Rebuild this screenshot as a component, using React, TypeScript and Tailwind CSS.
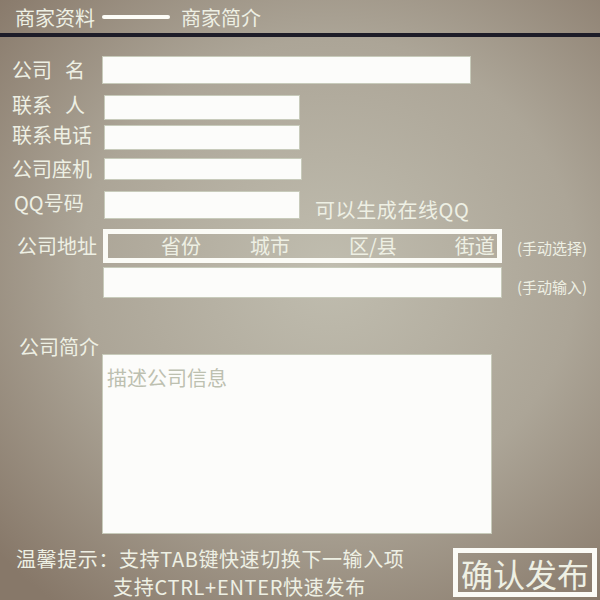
import React from 'react'

const inputCls = 'block bg-[#fcfcfa] border border-[#c8cbbb] outline-none'

function Label({ children, className = '' }: { children: React.ReactNode; className?: string }) {
  return <span className={`text-[20px] leading-[24px] whitespace-nowrap ${className}`}>{children}</span>
}

export default function App() {
  return (
    <div className="w-[600px] h-[600px] overflow-hidden flex flex-col *:shrink-0 text-[#eef0e4] font-['Noto_Sans_CJK_SC','Noto_Sans',sans-serif] bg-[radial-gradient(ellipse_75%_70%_at_55%_45%,#c0bdaf_0%,#aca597_55%,#877869_100%)]">
      {/* Tabs */}
      <div className="h-[33px] flex items-center pl-[15px] pt-[3px]">
        <span className="text-[20px] leading-none">商家资料</span>
        <span className="block w-[68px] h-[4px] rounded-full bg-[#fdfdf8] ml-[7px] mr-[11px] -mt-[3px]" />
        <span className="text-[20px] leading-none">商家简介</span>
      </div>
      <div className="h-[4px] bg-[#1d1c28]" />

      {/* 公司名 */}
      <div className="h-[28px] flex items-center mt-[19px] pl-[12px]">
        <Label className="w-[90px]">
          公司<span className="ml-[13px]">名</span>
        </Label>
        <input className={`${inputCls} w-[369px] h-[28px]`} />
      </div>

      {/* 联系人 */}
      <div className="h-[25px] flex items-center mt-[11px] pl-[12px]">
        <Label className="w-[92px] -mt-[6px]">
          联系<span className="ml-[13px]">人</span>
        </Label>
        <input className={`${inputCls} w-[196px] h-[25px]`} />
      </div>

      {/* 联系电话 */}
      <div className="h-[25px] flex items-center mt-[5px] pl-[12px]">
        <Label className="w-[92px] -mt-[5px]">联系电话</Label>
        <input className={`${inputCls} w-[196px] h-[25px]`} />
      </div>

      {/* 公司座机 */}
      <div className="h-[22px] flex items-center mt-[8px] pl-[12px]">
        <Label className="w-[92px]">公司座机</Label>
        <input className={`${inputCls} w-[198px] h-[22px]`} />
      </div>

      {/* QQ */}
      <div className="h-[28px] flex items-center mt-[11px] pl-[14px]">
        <Label className="w-[90px] -mt-[4px]">QQ号码</Label>
        <input className={`${inputCls} w-[196px] h-[28px]`} />
        <Label className="ml-[15px] mt-[10px] tracking-[0.6px]">可以生成在线QQ</Label>
      </div>

      {/* 地址 选择 */}
      <div className="h-[34px] flex items-center mt-[10px] pl-[17px]">
        <Label className="w-[86px]">公司地址</Label>
        <div className="w-[399px] h-[34px] border-[5px] border-[#fbfbf6] flex items-center text-[20px] leading-none">
          <span className="ml-[53px]">省份</span>
          <span className="ml-[49px]">城市</span>
          <span className="ml-[59px]">区/县</span>
          <span className="ml-[58px]">街道</span>
        </div>
        <span className="ml-[15px] text-[15px] leading-none mt-[2px] whitespace-nowrap">(手动选择)</span>
      </div>

      {/* 地址 输入 */}
      <div className="h-[31px] flex items-center mt-[4px] pl-[103px]">
        <input className={`${inputCls} w-[399px] h-[31px]`} />
        <span className="ml-[15px] text-[15px] leading-none mt-[7px] whitespace-nowrap">(手动输入)</span>
      </div>

      {/* 公司简介 */}
      <div className="flex items-start mt-[37px] pl-[19px]">
        <Label className="w-[83px]">公司简介</Label>
        <textarea
          placeholder="描述公司信息"
          className={`${inputCls} resize-none w-[390px] h-[180px] mt-[19px] px-[4px] pt-[9px] text-[20px] leading-[28px] text-[#666] placeholder:text-[#bdc0b0]`}
        />
      </div>

      {/* 底部 */}
      <div className="flex items-start mt-[13px]">
        <div className="pl-[16px] text-[20px] leading-[24px] whitespace-nowrap flex flex-col gap-[4px]">
          <p className="tracking-[0.6px]">温馨提示：支持TAB键快速切换下一输入项</p>
          <p className="pl-[97px] tracking-[0.7px]">支持CTRL+ENTER快速发布</p>
        </div>
        <button className="ml-auto mr-[3px] mt-[1px] w-[144px] h-[49px] border-[5px] border-[#fbfbf6] flex items-center justify-center text-[32px] leading-none">
          确认发布
        </button>
      </div>
    </div>
  )
}
